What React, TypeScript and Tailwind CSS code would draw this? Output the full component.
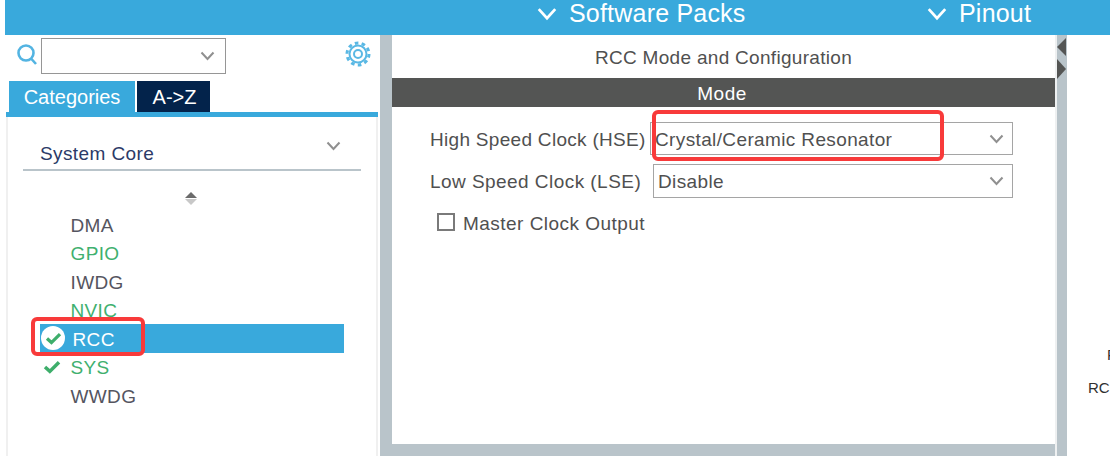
function Chevron({ className }: { className: string }) {
  return (
    <svg viewBox="0 0 16 10" className={className} fill="none" stroke="currentColor" strokeWidth="2">
      <path d="M2 1.5 L8 8 L14 1.5" />
    </svg>
  );
}

function Check({ className }: { className: string }) {
  return (
    <svg viewBox="0 0 20 16" className={className} fill="none" stroke="#3eae6b" strokeWidth="4">
      <path d="M2 8 L7.5 13 L18 2.5" />
    </svg>
  );
}

function Select({ value, className }: { value: string; className: string }) {
  return (
    <div className={`flex items-center justify-between border border-[#a5a5a5] ${className}`}>
      <span className="pt-[3px] tracking-[0.37px]">{value}</span>
      <Chevron className="w-[17px] h-[10px] mr-[7px] mt-[1px] text-[#909090]" />
    </div>
  );
}

const items = [
  { name: "DMA", color: "text-[#55555f]" },
  { name: "GPIO", color: "text-[#3fb06f]" },
  { name: "IWDG", color: "text-[#55555f]" },
  { name: "NVIC", color: "text-[#3fb06f]" },
  { name: "RCC", color: "text-white", selected: true },
  { name: "SYS", color: "text-[#3fb06f]", checked: true },
  { name: "WWDG", color: "text-[#55555f]" },
];

export default function App() {
  return (
    <div className="relative w-[1110px] h-[456px] overflow-hidden bg-white flex flex-col font-['Liberation_Sans',sans-serif]">
      {/* top bar */}
      <div className="ml-[5px] h-[35px] shrink-0 bg-[#39a9dc] flex items-center text-white text-[25px] leading-[28px] pl-[531px]">
        <Chevron className="w-[22px] h-[14px] mr-[11px] mb-[8px]" />
        <span className="w-[357px] tracking-[0.2px] pb-[9px]">Software Packs</span>
        <Chevron className="w-[22px] h-[14px] mr-[11px] mb-[8px]" />
        <span className="tracking-[0.2px] pb-[9px]">Pinout</span>
      </div>

      <div className="flex flex-1 min-h-0 ml-[5px]">
        {/* left panel */}
        <div className="w-[375px] shrink-0 flex flex-col">
          <div className="h-[46px] flex items-start pt-[3px] pl-[11px] shrink-0">
            <svg viewBox="0 0 22 24" className="w-[22px] h-[24px] mt-[5px] mr-[3px]" fill="none" stroke="#53b4e2">
              <circle cx="10" cy="10" r="7.5" strokeWidth="2.6" />
              <path d="M15.5 16 L20 21" strokeWidth="2.6" />
            </svg>
            <div className="w-[185px] h-[36px] border border-[#969696] flex items-center justify-end">
              <Chevron className="w-[17px] h-[10px] mr-[9px] text-[#909090]" />
            </div>
            <svg viewBox="0 0 26 26" className="w-[26px] h-[26px] ml-[119px] mt-[3px]" fill="none" stroke="#5ab8e4">
              <circle cx="13" cy="13" r="8.5" strokeWidth="2" />
              <circle cx="13" cy="13" r="4" strokeWidth="2" />
              <circle cx="13" cy="13" r="11" strokeWidth="3" strokeDasharray="3.6 3.3" />
            </svg>
          </div>
          <div className="h-[31px] shrink-0 flex items-stretch pl-[4px] gap-[2px] text-white text-[20px]">
            <div className="w-[126px] bg-[#39a9dc] flex items-center justify-center">Categories</div>
            <div className="w-[73px] bg-[#03234b] flex items-center justify-center pl-[2px]">A-&gt;Z</div>
          </div>
          <div className="h-[5px] shrink-0 bg-[#39a9dc] ml-[1px] mr-[2px]" />
          <div className="flex-1 min-h-0 border-l-[2px] border-r-[2px] border-[#f0f0f0] ml-[1px] mr-[2px] pl-[15px]">
            <div className="w-[338px] h-[42px] mt-[12px] border-b-[2px] border-[#b9c4ca] flex items-center justify-between pl-[17px] pr-[19px] text-[#2b3a67] text-[19px] tracking-[0.4px]">
              <span className="pt-[10px]">System Core</span>
              <Chevron className="w-[17px] h-[10px] mb-[6px] text-[#909090]" />
            </div>
            <div className="flex flex-col items-center w-[336px] mt-[21px] gap-[1px]">
              <div className="w-0 h-0 border-x-[6px] border-x-transparent border-b-[6px] border-b-[#6b6b6b]" />
              <div className="w-0 h-0 border-x-[6px] border-x-transparent border-t-[6px] border-t-[#c8c8c8]" />
            </div>
            <div className="mt-[5px] ml-[17px]">
              {items.map((item) => (
                <div
                  key={item.name}
                  className={`relative h-[28.5px] w-[304px] flex items-center pt-[3px] text-[19px] tracking-[0.35px] ${item.color} ${item.selected ? "bg-[#39a9dc]" : ""} ${item.selected ? "pl-[32.5px]" : "pl-[30.5px]"}`}
                >
                  {item.selected && (
                    <span className="absolute left-[1px] top-[2px] w-[24px] h-[24px] rounded-full bg-white flex items-center justify-center">
                      <Check className="w-[17px] h-[13px]" />
                    </span>
                  )}
                  {item.checked && <Check className="absolute left-[3px] top-[7px] w-[18px] h-[14px]" />}
                  {item.name}
                </div>
              ))}
            </div>
          </div>
        </div>

        {/* gutter */}
        <div className="w-[12px] shrink-0 bg-[#b9c4ca]" />

        {/* center panel */}
        <div className="w-[663px] shrink-0 flex flex-col text-[#505050] text-[19px]">
          <div className="h-[43px] shrink-0 flex items-center justify-center pt-[3px] tracking-[0.3px]">RCC Mode and Configuration</div>
          <div className="h-[29px] shrink-0 bg-[#545554] text-white flex items-center justify-center pt-[3px] pr-[3px] tracking-[0.5px]">Mode</div>
          <div className="flex-1 min-h-0 pl-[38px] pt-[15px]">
            <div className="flex items-center h-[33px]">
              <span className="w-[220px] pt-[3px] tracking-[0.3px]">High Speed Clock (HSE)</span>
              <Select value="Crystal/Ceramic Resonator" className="w-[363px] h-[33px] pl-[4px]" />
            </div>
            <div className="flex items-center h-[33px] mt-[9px]">
              <span className="w-[223px] pt-[3px] tracking-[0.45px]">Low Speed Clock (LSE)</span>
              <Select value="Disable" className="w-[360px] h-[34px] pl-[4px]" />
            </div>
            <div className="flex items-center mt-[9px] pl-[7px]">
              <span className="w-[18px] h-[18px] border-[2px] border-[#7a7a7a] mr-[8px]" />
              <span className="pt-[4px] tracking-[0.47px]">Master Clock Output</span>
            </div>
          </div>
          <div className="h-[12px] shrink-0 bg-[#b9c4ca]" />
        </div>

        {/* splitter */}
        <div className="w-[2px] shrink-0 bg-[#eef0f1]" />
        <div className="w-[10px] shrink-0 bg-[#b9c4ca] flex flex-col items-start pt-[3px] gap-[3px]">
          <div className="w-0 h-0 border-y-[9px] border-y-transparent border-r-[9px] border-r-[#545554]" />
          <div className="w-0 h-0 border-y-[10px] border-y-transparent border-l-[9px] border-l-[#545554]" />
        </div>

        {/* right panel, labels cut off at the window edge */}
        <div className="flex-1 min-w-0 overflow-hidden text-[15px] leading-[18px] text-[#303030] pt-[311px] whitespace-nowrap">
          <div className="pl-[40px]">RCC</div>
          <div className="pl-[21px] mt-[15px]">RCC</div>
        </div>
      </div>

      {/* red annotation boxes */}
      <div className="absolute left-[31px] top-[317px] w-[114px] h-[39px] border-[4px] border-[#f83a3a] rounded-[6px]" />
      <div className="absolute left-[652px] top-[110px] w-[292px] h-[51px] border-[4px] border-[#f83a3a] rounded-[6px]" />
    </div>
  );
}
